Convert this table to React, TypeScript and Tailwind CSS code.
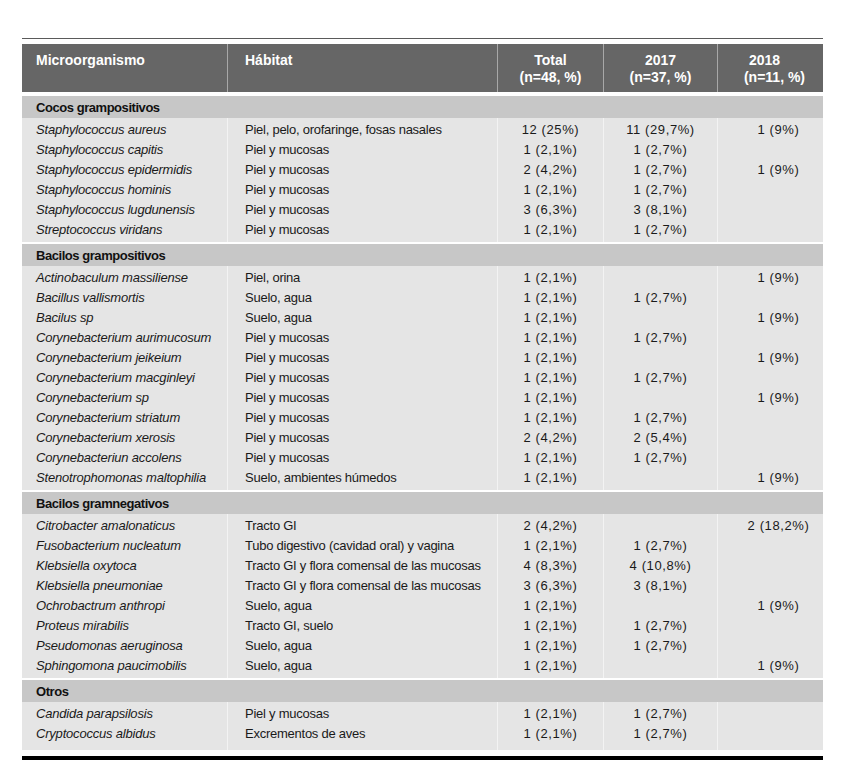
import React from "react";

type Row = [string, string, string, string, string];
type Section = { title: string; rows: Row[] };

const sections: Section[] = [
  {
    title: "Cocos grampositivos",
    rows: [
      ["Staphylococcus aureus", "Piel, pelo, orofaringe, fosas nasales", "12 (25%)", "11 (29,7%)", "1 (9%)"],
      ["Staphylococcus capitis", "Piel y mucosas", "1 (2,1%)", "1 (2,7%)", ""],
      ["Staphylococcus epidermidis", "Piel y mucosas", "2 (4,2%)", "1 (2,7%)", "1 (9%)"],
      ["Staphylococcus hominis", "Piel y mucosas", "1 (2,1%)", "1 (2,7%)", ""],
      ["Staphylococcus lugdunensis", "Piel y mucosas", "3 (6,3%)", "3 (8,1%)", ""],
      ["Streptococcus viridans", "Piel y mucosas", "1 (2,1%)", "1 (2,7%)", ""],
    ],
  },
  {
    title: "Bacilos grampositivos",
    rows: [
      ["Actinobaculum massiliense", "Piel, orina", "1 (2,1%)", "", "1 (9%)"],
      ["Bacillus vallismortis", "Suelo, agua", "1 (2,1%)", "1 (2,7%)", ""],
      ["Bacilus sp", "Suelo, agua", "1 (2,1%)", "", "1 (9%)"],
      ["Corynebacterium aurimucosum", "Piel y mucosas", "1 (2,1%)", "1 (2,7%)", ""],
      ["Corynebacterium jeikeium", "Piel y mucosas", "1 (2,1%)", "", "1 (9%)"],
      ["Corynebacterium macginleyi", "Piel y mucosas", "1 (2,1%)", "1 (2,7%)", ""],
      ["Corynebacterium sp", "Piel y mucosas", "1 (2,1%)", "", "1 (9%)"],
      ["Corynebacterium striatum", "Piel y mucosas", "1 (2,1%)", "1 (2,7%)", ""],
      ["Corynebacterium xerosis", "Piel y mucosas", "2 (4,2%)", "2 (5,4%)", ""],
      ["Corynebacteriun accolens", "Piel y mucosas", "1 (2,1%)", "1 (2,7%)", ""],
      ["Stenotrophomonas maltophilia", "Suelo, ambientes húmedos", "1 (2,1%)", "", "1 (9%)"],
    ],
  },
  {
    title: "Bacilos gramnegativos",
    rows: [
      ["Citrobacter amalonaticus", "Tracto GI", "2 (4,2%)", "", "2 (18,2%)"],
      ["Fusobacterium nucleatum", "Tubo digestivo (cavidad oral) y vagina", "1 (2,1%)", "1 (2,7%)", ""],
      ["Klebsiella oxytoca", "Tracto GI y flora comensal de las mucosas", "4 (8,3%)", "4 (10,8%)", ""],
      ["Klebsiella pneumoniae", "Tracto GI y flora comensal de las mucosas", "3 (6,3%)", "3 (8,1%)", ""],
      ["Ochrobactrum anthropi", "Suelo, agua", "1 (2,1%)", "", "1 (9%)"],
      ["Proteus mirabilis", "Tracto GI, suelo", "1 (2,1%)", "1 (2,7%)", ""],
      ["Pseudomonas aeruginosa", "Suelo, agua", "1 (2,1%)", "1 (2,7%)", ""],
      ["Sphingomona paucimobilis", "Suelo, agua", "1 (2,1%)", "", "1 (9%)"],
    ],
  },
  {
    title: "Otros",
    rows: [
      ["Candida parapsilosis", "Piel y mucosas", "1 (2,1%)", "1 (2,7%)", ""],
      ["Cryptococcus albidus", "Excrementos de aves", "1 (2,1%)", "1 (2,7%)", ""],
    ],
  },
];

const grid = "grid grid-cols-[205px_270px_106px_114px_106px]";

function Spacer({ h }: { h: string }) {
  return (
    <div className={grid}>
      <div className={h} />
      <div className={`${h} border-l border-[#f3f3f3]`} />
      <div className={`${h} border-l border-[#f3f3f3]`} />
      <div className={`${h} border-l border-[#f3f3f3]`} />
      <div className={`${h} border-l border-[#f3f3f3]`} />
    </div>
  );
}

function DataRow({ r }: { r: Row }) {
  return (
    <div className={`${grid} h-[20px] leading-[20px] text-[13px] text-[#1a1a1a]`}>
      <div className="pl-[14px] italic whitespace-nowrap tracking-[-0.2px]">{r[0]}</div>
      <div className="pl-[17px] border-l border-[#f3f3f3] whitespace-nowrap tracking-[-0.25px]">{r[1]}</div>
      <div className="text-center border-l border-[#f3f3f3] whitespace-nowrap tracking-[0.6px]">{r[2]}</div>
      <div className="text-center border-l border-[#f3f3f3] whitespace-nowrap tracking-[0.6px]">{r[3]}</div>
      <div className="text-center pl-[16px] border-l border-[#f3f3f3] whitespace-nowrap tracking-[0.6px]">{r[4]}</div>
    </div>
  );
}

export default function App() {
  return (
    <div
      className="w-[846px] h-[764px] bg-white pt-[38px]"
      style={{ fontFamily: '"Liberation Sans", Arial, sans-serif' }}
    >
      <div className="ml-[22px] w-[801px]">
        <div className="h-px bg-[#5a5a5a]" />
        <div className={`${grid} mt-[5px] h-[48px] bg-[#666666] text-white font-bold text-[14px] leading-[17px]`}>
          <div className="pl-[14px] pt-[8px]">Microorganismo</div>
          <div className="pl-[17px] pt-[8px] border-l border-[#a8a8a8]">Hábitat</div>
          <div className="pt-[8px] text-center border-l border-[#a8a8a8]">
            <div>Total</div>
            <div>(n=48, %)</div>
          </div>
          <div className="pt-[8px] text-center border-l border-[#a8a8a8]">
            <div>2017</div>
            <div>(n=37, %)</div>
          </div>
          <div className="pt-[8px] pl-[8px] text-center border-l border-[#a8a8a8]">
            <div className="pr-[20px]">2018</div>
            <div>(n=11, %)</div>
          </div>
        </div>
        <div className="mt-[4px] flex flex-col gap-[2px]">
          {sections.map((s, i) => (
            <div key={s.title} className="bg-[#e5e5e5]">
              <div className="h-[22px] pt-px leading-[22px] bg-[#c7c7c7] pl-[14px] font-bold text-[13px] text-[#111] tracking-[-0.45px]">
                {s.title}
              </div>
              <Spacer h="h-[2px]" />
              {s.rows.map((r) => (
                <DataRow key={r[0]} r={r} />
              ))}
              <Spacer h={i === sections.length - 1 ? "h-[6px]" : "h-[2px]"} />
            </div>
          ))}
        </div>
        <div className="mt-[6px] h-[4px] bg-black" />
      </div>
    </div>
  );
}
